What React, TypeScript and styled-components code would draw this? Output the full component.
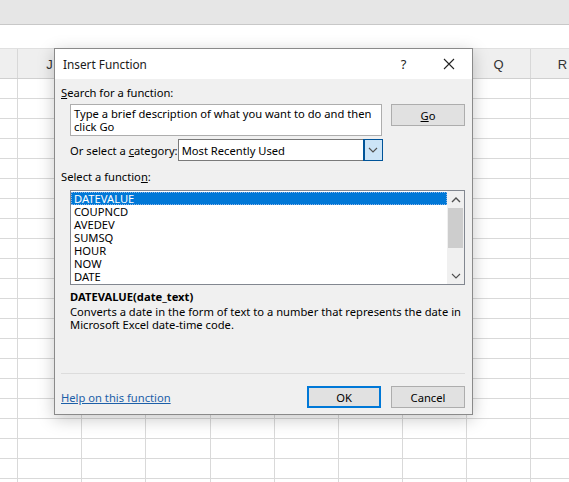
import styled, { createGlobalStyle } from "styled-components";

const GlobalStyle = createGlobalStyle`
    html, body {
        margin: 0;
        padding: 0;
        background: #ffffff;
        overflow: hidden;
    }
    * {
        box-sizing: border-box;
    }
`;

const COLUMNS = [
    { letter: "", width: 18 },
    { letter: "J", width: 64 },
    { letter: "K", width: 64 },
    { letter: "L", width: 65 },
    { letter: "M", width: 64 },
    { letter: "N", width: 64 },
    { letter: "O", width: 64 },
    { letter: "P", width: 64 },
    { letter: "Q", width: 64 },
    { letter: "R", width: 64 },
];

const FUNCTIONS = ["DATEVALUE", "COUPNCD", "AVEDEV", "SUMSQ", "HOUR", "NOW", "DATE"];

const ChevronDown = () => (
    <svg width="10" height="6" viewBox="0 0 10 6">
        <path d="M1 1 L5 5 L9 1" fill="none" stroke="#505050" strokeWidth="1.1" />
    </svg>
);

const ChevronUp = () => (
    <svg width="10" height="6" viewBox="0 0 10 6">
        <path d="M1 5 L5 1 L9 5" fill="none" stroke="#505050" strokeWidth="1.4" />
    </svg>
);

const App = () => {
    return (
        <Page>
            <GlobalStyle />
            <Sheet>
                <Ribbon />
                <FormulaBar />
                <HeaderRow>
                    {COLUMNS.map((c, i) => (
                        <HeaderCell key={i} $w={c.width}>
                            {c.letter}
                        </HeaderCell>
                    ))}
                </HeaderRow>
                {[...Array(21)].map((_, r) => (
                    <Row key={r}>
                        {COLUMNS.map((c, i) => (
                            <Cell key={i} $w={c.width} />
                        ))}
                    </Row>
                ))}
            </Sheet>

            <Dialog>
                <TitleBar>
                    <Title>Insert Function</Title>
                    <TitleButtons>
                        <HelpMark>?</HelpMark>
                        <CloseMark>
                            <svg width="12" height="12" viewBox="0 0 12 12">
                                <path
                                    d="M1 1 L11 11 M11 1 L1 11"
                                    stroke="#222"
                                    strokeWidth="1.1"
                                    fill="none"
                                />
                            </svg>
                        </CloseMark>
                    </TitleButtons>
                </TitleBar>

                <Body>
                    <Label>
                        <u>S</u>earch for a function:
                    </Label>
                    <SearchRow>
                        <SearchBox>
                            Type a brief description of what you want to do and then
                            <br />
                            click Go
                        </SearchBox>
                        <Button>
                            <u>G</u>o
                        </Button>
                    </SearchRow>

                    <CategoryRow>
                        <span>
                            Or select a <u>c</u>ategory:
                        </span>
                        <Select>
                            <span>Most Recently Used</span>
                            <SelectArrow>
                                <ChevronDown />
                            </SelectArrow>
                        </Select>
                    </CategoryRow>

                    <Label $top={8}>
                        Select a functio<u>n</u>:
                    </Label>
                    <ListBox>
                        <Items>
                            {FUNCTIONS.map((f, i) => (
                                <Item key={f} $selected={i === 0}>
                                    {f}
                                </Item>
                            ))}
                        </Items>
                        <ScrollBar>
                            <ScrollArrow>
                                <ChevronUp />
                            </ScrollArrow>
                            <Thumb />
                            <ScrollSpace />
                            <ScrollArrow>
                                <ChevronDown />
                            </ScrollArrow>
                        </ScrollBar>
                    </ListBox>

                    <Signature>DATEVALUE(date_text)</Signature>
                    <Description>
                        Converts a date in the form of text to a number that represents the date in
                        <br />
                        Microsoft Excel date-time code.
                    </Description>

                    <Separator />

                    <Footer>
                        <HelpLink href="#">Help on this function</HelpLink>
                        <FooterButtons>
                            <Button $primary>OK</Button>
                            <Button>Cancel</Button>
                        </FooterButtons>
                    </Footer>
                </Body>
            </Dialog>
        </Page>
    );
};

export default App;

const Page = styled.div`
    position: relative;
    width: 569px;
    height: 482px;
    overflow: hidden;
    font-family: "Noto Sans", "Open Sans", sans-serif;
`;

const Sheet = styled.div`
    display: flex;
    flex-direction: column;
`;

const Ribbon = styled.div`
    height: 25px;
    background: #e6e6e6;
    border-bottom: 1px solid #c8c8c8;
`;

const FormulaBar = styled.div`
    height: 23px;
    background: #ffffff;
`;

const HeaderRow = styled.div`
    display: flex;
    height: 31px;
    background: #efefef;
    border-top: 1px solid #e0e0e0;
    border-bottom: 1px solid #d0d0d0;
`;

const HeaderCell = styled.div<{ $w: number }>`
    width: ${(p) => p.$w}px;
    flex-shrink: 0;
    display: flex;
    align-items: flex-end;
    justify-content: center;
    padding-bottom: 6px;
    font-family: "Liberation Sans", Arial, sans-serif;
    font-size: 13px;
    color: #333;
    border-right: 1px solid #d8d8d8;
`;

const Row = styled.div`
    display: flex;
    height: 20px;
    border-bottom: 1px solid #d9d9d9;
`;

const Cell = styled.div<{ $w: number }>`
    width: ${(p) => p.$w}px;
    flex-shrink: 0;
    border-right: 1px solid #d9d9d9;
`;

const Dialog = styled.div`
    position: absolute;
    left: 54px;
    top: 48px;
    width: 419px;
    height: 367px;
    display: flex;
    flex-direction: column;
    background: #f0f0f0;
    border: 1px solid #8a8a8a;
    box-shadow: 0 4px 16px rgba(0, 0, 0, 0.22);
    font-size: 11.2px;
    color: #000;
`;

const TitleBar = styled.div`
    height: 30px;
    flex-shrink: 0;
    background: #ffffff;
    display: flex;
    align-items: center;
    justify-content: space-between;
    padding-left: 8px;
`;

const Title = styled.div`
    font-size: 11.8px;
    color: #1a1a1a;
`;

const TitleButtons = styled.div`
    display: flex;
    align-items: center;
    height: 100%;
`;

const HelpMark = styled.div`
    width: 45px;
    text-align: center;
    font-size: 13px;
    color: #222;
`;

const CloseMark = styled.div`
    width: 46px;
    display: flex;
    justify-content: center;
    align-items: center;
`;

const Body = styled.div`
    flex: 1;
    display: flex;
    flex-direction: column;
    padding: 6px 7px 0 6px;
`;

const Label = styled.div<{ $top?: number }>`
    margin-top: ${(p) => p.$top ?? 0}px;
    line-height: 16px;
`;

const SearchRow = styled.div`
    display: flex;
    align-items: flex-start;
    justify-content: space-between;
    margin-top: 3px;
    padding-left: 9px;
`;

const SearchBox = styled.div`
    width: 312px;
    height: 32px;
    background: #fff;
    border: 1px solid #adadad;
    padding: 2px 3px;
    line-height: 13px;
    white-space: nowrap;
`;

const Button = styled.button<{ $primary?: boolean }>`
    width: 74px;
    height: 22px;
    padding: 0;
    font-family: inherit;
    font-size: 11.2px;
    color: #000;
    background: #e1e1e1;
    border: ${(p) => (p.$primary ? "2px solid #0078d7" : "1px solid #adadad")};
`;

const CategoryRow = styled.div`
    width: 321px;
    display: flex;
    align-items: center;
    justify-content: space-between;
    margin-top: 3px;
    padding-left: 9px;
    white-space: nowrap;
`;

const Select = styled.div`
    width: 205px;
    height: 22px;
    flex-shrink: 0;
    display: flex;
    align-items: center;
    justify-content: space-between;
    background: #fff;
    border: 1px solid #7a7a7a;
    padding-left: 3px;
`;

const SelectArrow = styled.div`
    width: 18px;
    height: 20px;
    display: flex;
    align-items: center;
    justify-content: center;
    background: #cce4f7;
    border-left: 1px solid #005499;
    outline: 1px solid #005499;
`;

const ListBox = styled.div`
    margin: 5px 0 0 9px;
    height: 95px;
    display: flex;
    background: #fff;
    border: 1px solid #828790;
    overflow: hidden;
`;

const Items = styled.div`
    flex: 1;
    padding-top: 1px;
`;

const Item = styled.div<{ $selected?: boolean }>`
    height: 13px;
    line-height: 13px;
    padding-left: 3px;
    background: ${(p) => (p.$selected ? "#0078d7" : "transparent")};
    color: ${(p) => (p.$selected ? "#fff" : "#000")};
    outline: ${(p) => (p.$selected ? "1px dotted #8ab4e8" : "none")};
    outline-offset: -1px;
`;

const ScrollBar = styled.div`
    width: 17px;
    display: flex;
    flex-direction: column;
    background: #f0f0f0;
`;

const ScrollArrow = styled.div`
    height: 17px;
    display: flex;
    align-items: center;
    justify-content: center;
`;

const Thumb = styled.div`
    height: 40px;
    margin: 0 1px;
    background: #cdcdcd;
`;

const ScrollSpace = styled.div`
    flex: 1;
`;

const Signature = styled.div`
    margin: 4px 0 0 9px;
    font-weight: 700;
    line-height: 16px;
`;

const Description = styled.div`
    margin: 0 0 0 9px;
    line-height: 13px;
    white-space: nowrap;
`;

const Separator = styled.div`
    margin-top: 42px;
    height: 1px;
    background: #dcdcdc;
`;

const Footer = styled.div`
    display: flex;
    align-items: center;
    justify-content: space-between;
    margin-top: 12px;
`;

const HelpLink = styled.a`
    color: #1c5fa8;
    text-decoration: underline;
`;

const FooterButtons = styled.div`
    display: flex;
    gap: 10px;
`;
